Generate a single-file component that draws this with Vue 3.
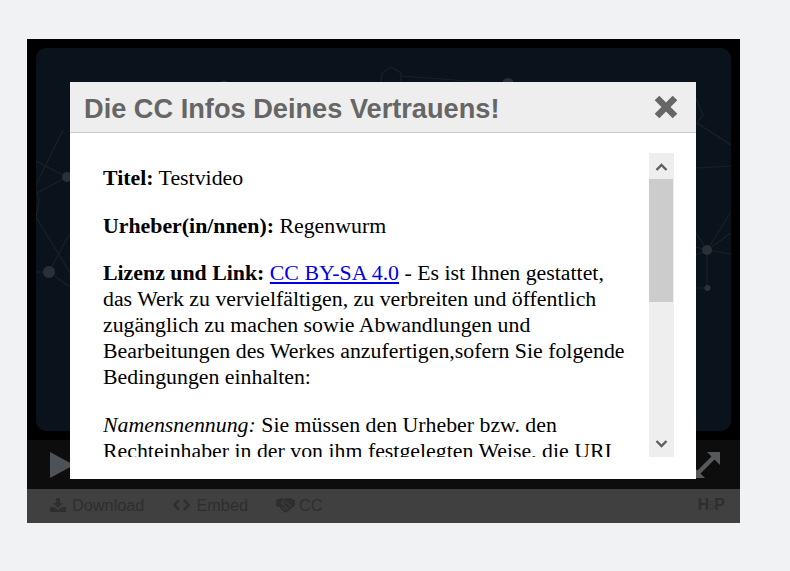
<template>
  <div class="page">
    <div class="player">
      <div class="stage">
        <div class="video">
          <svg class="network" viewBox="0 0 695 383" fill="none">
            <g stroke="#1b2027" stroke-width="1.200">
              <path v-for="(l, i) in lines" :key="i" :d="l" />
            </g>
            <g fill="#2b3036">
              <circle v-for="(n, i) in nodes" :key="i" :cx="n[0]" :cy="n[1]" :r="n[2]" />
            </g>
          </svg>
        </div>
      </div>
      <div class="controls">
        <svg class="play" width="24" height="26" viewBox="0 0 24 26"><path d="M0 0 L24 13 L0 26 Z" fill="#4e5257" /></svg>
        <svg class="expand" width="28" height="28" viewBox="0 0 28 28">
          <path d="M5 23 L23 5" stroke="#56585a" stroke-width="4.500" />
          <path d="M15 1 H28 V14 Z" fill="#56585a" />
          <path d="M0 14 V27 H13 Z" fill="#56585a" />
        </svg>
      </div>
      <div class="footer">
        <span class="action">
          <svg width="16" height="14" viewBox="0 0 16 14"><path d="M6 0h4v5h3L8 10 3 5h3zM0 9h4l4 3 4-3h4v5H0z" fill="#2e2e2e" /></svg>
          Download
        </span>
        <span class="action">
          <svg width="17" height="12" viewBox="0 0 17 12" fill="none"><path d="M6 1 1.500 6 6 11M11 1l4.500 5L11 11" stroke="#2e2e2e" stroke-width="2.400" /></svg>
          Embed
        </span>
        <span class="action shake">
          <svg width="19" height="16" viewBox="0 0 19 16"><path d="M0 3 5 1l3 1 3-1 3 0 5 2v6l-3 2-5 4q-2 1-3 0L3 10 0 9z" fill="#2e2e2e" /><path d="M8 3 5.500 6.500 8 7.500 10.500 5 15 9.500M6 9.500l4 4M8.500 8.500l3.500 3.500" stroke="#454545" stroke-width="0.900" fill="none" /></svg>
          CC
        </span>
        <span class="logo">H<i>5</i>P</span>
      </div>
      <div class="modal">
        <div class="modal-head">
          <h2>Die CC Infos Deines Vertrauens!</h2>
          <svg class="close" width="24" height="24" viewBox="0 0 24 24"><path d="M3 3 21 21M21 3 3 21" stroke="#666" stroke-width="6.500" /></svg>
        </div>
        <div class="modal-body">
          <div class="text">
            <p><b>Titel:</b> Testvideo</p>
            <p><b>Urheber(in/nnen):</b> Regenwurm</p>
            <p><b>Lizenz und Link:</b> <a href="#">CC BY-SA 4.0</a> - Es ist Ihnen gestattet, das Werk zu vervielfältigen, zu verbreiten und öffentlich zugänglich zu machen sowie Abwandlungen und Bearbeitungen des Werkes anzufertigen,sofern Sie folgende Bedingungen einhalten:</p>
            <p><i>Namensnennung:</i> Sie müssen den Urheber bzw. den Rechteinhaber in der von ihm festgelegten Weise, die URI (also die Adresse) des Werkes und die Lizenz nennen.</p>
          </div>
          <div class="scrollbar">
            <svg class="arrow" width="13" height="26" viewBox="0 0 13 26" fill="none"><path d="M1.500 17 6.500 12l5 5" stroke="#5f5f5f" stroke-width="2.400" /></svg>
            <div class="thumb"></div>
            <svg class="arrow down" width="13" height="26" viewBox="0 0 13 26" fill="none"><path d="M1.500 10 6.500 15l5-5" stroke="#5f5f5f" stroke-width="2.400" /></svg>
          </div>
        </div>
      </div>
    </div>
  </div>
</template>

<script setup>
const nodes = [
  [31, 129, 5], [13, 224, 6], [188, 38, 5], [472, 36, 6],
  [671, 202, 5], [671.5, 240, 3]
]
const lines = [
  'M0 113 L31 129 L1 145 L3 152 L0 170',
  'M27 82 L0 137',
  'M0 169 L34 225',
  'M34 185 L13 224',
  'M0 224 H13 L34 239',
  'M345 35 L346 25 L355 19 L365 25 L365 35',
  'M365 28 L472 36',
  'M660 50 L667 67 L661 75 L695 97',
  'M660 120 L695 118',
  'M671 202 L695 164',
  'M671 202 L695 185',
  'M671 202 L695 206',
  'M671 202 L660 185',
  'M671 202 L660 199',
  'M671 202 L660 207',
  'M671 202 V240',
  'M660 240 H671'
]
</script>

<style scoped>
.page {
  width: 790px;
  height: 571px;
  padding: 39px 0 0 27px;
  box-sizing: border-box;
  overflow: hidden;
}

.player {
  position: relative;
  width: 713px;
  height: 484px;
  display: flex;
  flex-direction: column;
  background: #000;
}

.stage {
  height: 401px;
  padding: 9px;
  box-sizing: border-box;
  background: #000;
}

.video {
  height: 383px;
  border-radius: 10px;
  background: #0a131b;
  overflow: hidden;
}

.network {
  display: block;
  width: 100%;
  height: 100%;
}

.controls {
  height: 49px;
  background: #0d0d0d;
  display: flex;
  align-items: center;
  justify-content: space-between;
  padding: 0 20px 0 23px;
}

.footer {
  flex: 1;
  background: #404040;
  display: flex;
  align-items: center;
  gap: 29px;
  padding: 0 16px 2px 23px;
  font-family: "Liberation Sans", Arial, sans-serif;
  font-size: 16.300px;
  color: #2e2e2e;
}

.action {
  display: flex;
  align-items: center;
  gap: 6px;
}

.shake {
  gap: 4px;
  margin-left: -1px;
}

.logo {
  margin-left: auto;
  font-weight: bold;
  font-size: 16px;
  letter-spacing: -0.800px;
}

.logo i {
  font-style: normal;
  font-size: 12px;
  color: #383838;
}

.modal {
  position: absolute;
  left: 43px;
  top: 43px;
  width: 626px;
  height: 397px;
  background: #fff;
  display: flex;
  flex-direction: column;
}

.modal-head {
  height: 50px;
  background: #eee;
  border-bottom: 1px solid #ccc;
  display: flex;
  align-items: center;
  justify-content: space-between;
  padding: 0 18px 0 14px;
  flex: none;
}

.modal-head h2 {
  margin: 3px 0 0;
  font-family: "Liberation Sans", Arial, sans-serif;
  font-size: 27.200px;
  font-weight: bold;
  color: #666;
}

.modal-body {
  display: flex;
  height: 304px;
  margin-top: 20px;
  padding: 0 22px 0 33px;
}

.text {
  flex: 1;
  overflow: hidden;
  padding-right: 20px;
  font-family: "Liberation Serif", "Times New Roman", serif;
  font-size: 21.840px;
  line-height: 26px;
  color: #000;
}

.text p {
  margin: 12px 0 21.500px;
}

.text a {
  color: #00e;
}

.scrollbar {
  width: 25px;
  flex: none;
  background: #eee;
  display: flex;
  flex-direction: column;
  align-items: flex-start;
}

.thumb {
  width: 24px;
  height: 123px;
  background: #ccc;
}

.arrow {
  flex: none;
  margin-left: 6px;
}

.arrow.down {
  margin-top: auto;
}
</style>

<style>
html, body {
  background: #f1f2f4;
}
</style>
